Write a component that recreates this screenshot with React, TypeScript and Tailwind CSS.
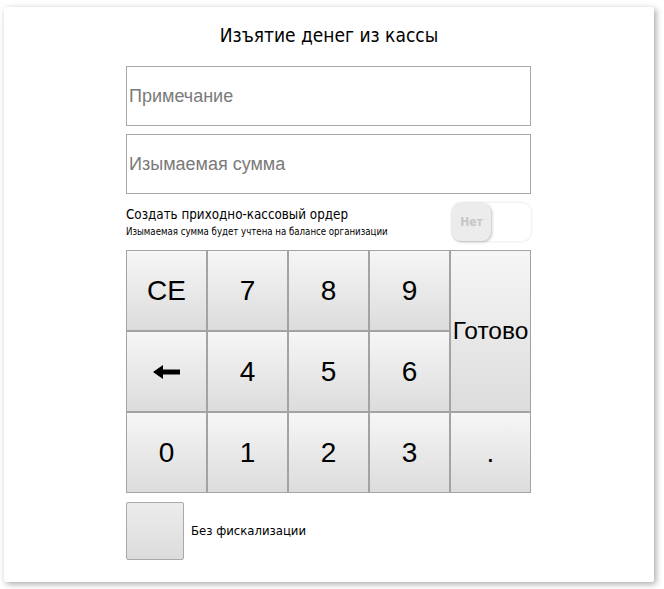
import * as React from 'react'

const ui = { fontFamily: '"DejaVu Sans Condensed", "DejaVu Sans", sans-serif' }
const arial = { fontFamily: '"Liberation Sans", Arial, sans-serif' }

const KEY =
  'flex items-center justify-center border border-[#a3a3a3] bg-gradient-to-b from-[#f6f6f6] to-[#dcdcdc] text-black'

function Key({ label, className = 'text-[28px]' }: { label: React.ReactNode; className?: string }) {
  return (
    <button type="button" className={`${KEY} ${className}`} style={arial}>
      {label}
    </button>
  )
}

function BackArrow() {
  return (
    <svg width="27" height="14" viewBox="0 0 27 14" aria-hidden="true">
      <path d="M0 7 L10 0 L10 4.5 L27 4.5 L27 9.5 L10 9.5 L10 14 Z" fill="#000" />
    </svg>
  )
}

export default function App() {
  const [fiscal, setFiscal] = React.useState(false)
  const [order, setOrder] = React.useState(false)

  return (
    <div className="h-[589px] w-[664px] bg-white pl-[4px] pt-[7px]">
      <div
        className="flex h-[575px] w-[650px] flex-col rounded-[2px] bg-white pt-[15px] shadow-[2px_2px_6px_rgba(0,0,0,0.35)]"
        style={ui}
      >
        <h1 className="text-center text-[19px] leading-[26px] text-black">Изъятие денег из кассы</h1>

        <div className="ml-[122px] flex w-[405px] flex-col">
          <div className="mt-[18px] flex flex-col gap-[8px]">
            <input
              className="h-[60px] w-full border border-[#a9a9a9] px-[2px] text-[18px] text-black outline-none placeholder:text-[#7a7a7a]"
              style={arial}
              placeholder="Примечание"
            />
            <input
              className="h-[60px] w-full border border-[#a9a9a9] px-[2px] text-[18px] text-black outline-none placeholder:text-[#7a7a7a]"
              style={arial}
              placeholder="Изымаемая сумма"
            />
          </div>

          <div className="mt-[9px] flex items-center justify-between">
            <div className="flex flex-col">
              <span className="text-[13.3px] leading-[19px] text-black">Создать приходно-кассовый ордер</span>
              <span className="text-[9.6px] leading-[16px] text-black">
                Изымаемая сумма будет учтена на балансе организации
              </span>
            </div>
            <button
              type="button"
              onClick={() => setOrder(!order)}
              className="flex h-[38px] w-[79px] rounded-[9px] bg-white shadow-[0_0_3px_rgba(0,0,0,0.15)]"
            >
              <span className="flex h-[38px] w-[39px] items-center justify-center rounded-[9px] bg-[#ececec] text-[12px] font-bold text-[#c6c6c6] shadow-[1px_1px_3px_rgba(0,0,0,0.25)]">
                {order ? 'Да' : 'Нет'}
              </span>
            </button>
          </div>

          <div className="mt-[9px] grid grid-cols-5 grid-rows-[81px_81px_81px]">
            <Key label="CE" />
            <Key label="7" />
            <Key label="8" />
            <Key label="9" />
            <Key label="Готово" className="row-span-2 text-[24.5px]" />
            <Key label={<BackArrow />} />
            <Key label="4" />
            <Key label="5" />
            <Key label="6" />
            <Key label="0" />
            <Key label="1" />
            <Key label="2" />
            <Key label="3" />
            <Key label="." />
          </div>

          <div className="mt-[9px] flex items-center gap-[7px]">
            <button
              type="button"
              onClick={() => setFiscal(!fiscal)}
              className="h-[58px] w-[58px] rounded-[2px] border border-[#a9a9a9] bg-gradient-to-b from-[#ececec] to-[#dcdcdc]"
            >
              {fiscal ? '✓' : ''}
            </button>
            <span className="text-[13px] text-black">Без фискализации</span>
          </div>
        </div>
      </div>
    </div>
  )
}
